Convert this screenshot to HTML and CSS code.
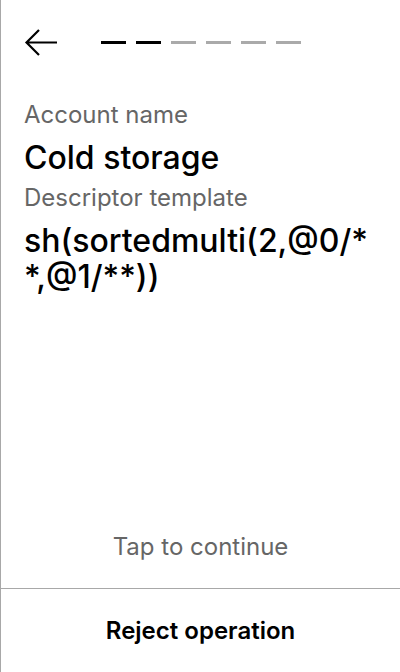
FILE: index.html
```html
<!DOCTYPE html>
<html>
<head>
<meta charset="utf-8">
<link rel="stylesheet" href="styles.css">
</head>
<body>
<div class="screen">
  <div class="header">
    <svg class="back" width="34" height="30" viewBox="0 0 34 30">
      <path d="M33 14.5H3M15 2L2.5 14.5L15 27" fill="none" stroke="#000" stroke-width="2.2"/>
    </svg>
    <div class="progress">
      <span class="dash on"></span>
      <span class="dash on"></span>
      <span class="dash"></span>
      <span class="dash"></span>
      <span class="dash"></span>
      <span class="dash"></span>
    </div>
  </div>
  <div class="content">
    <div class="label">Account name</div>
    <div class="value">Cold storage</div>
    <div class="label">Descriptor template</div>
    <div class="value">sh(sortedmulti(2,@0/**,@1/**))</div>
  </div>
  <div class="tap">Tap to continue</div>
  <div class="footer">Reject operation</div>
</div>
</body>
</html>
```

FILE: styles.css
```css
html, body {
  margin: 0;
  padding: 0;
  background: #fff;
}
body {
  font-family: Inter, "Noto Sans", sans-serif;
  color: #000;
}
.screen {
  width: 399px;
  height: 672px;
  border-left: 1px solid #a8a8a8;
  display: flex;
  flex-direction: column;
}
.header {
  display: flex;
  align-items: center;
  padding: 28px 0 0 23px;
  height: 30px;
}
.back {
  display: block;
}
.progress {
  display: flex;
  gap: 10px;
  margin-left: 43px;
  margin-top: -2px;
}
.dash {
  width: 25px;
  height: 3px;
  background: #aaa;
}
.dash.on {
  background: #000;
}
.content {
  padding: 43px 23px 0 23px;
  flex: 1;
}
.label {
  font-size: 24px;
  line-height: 28px;
  color: #666;
}
.value + .label {
  margin-top: 8px;
}
.value {
  font-size: 32px;
  font-weight: 500;
  line-height: 36px;
  margin-top: 11px;
  word-break: break-all;
}
.tap {
  text-align: center;
  font-size: 24px;
  color: #666;
  line-height: 28px;
  padding-bottom: 27px;
}
.footer {
  border-top: 1px solid #a8a8a8;
  flex: 0 0 83px;
  display: flex;
  align-items: center;
  justify-content: center;
  font-size: 24px;
  font-weight: 600;
}
```
